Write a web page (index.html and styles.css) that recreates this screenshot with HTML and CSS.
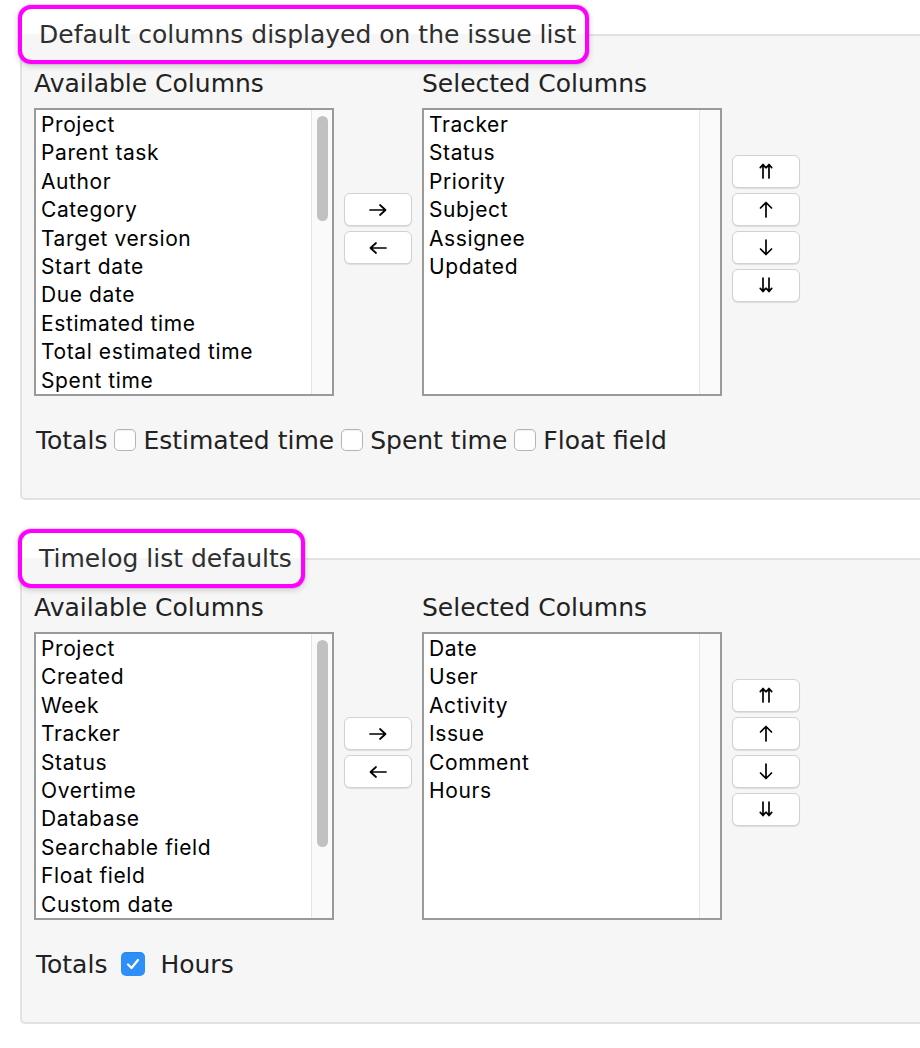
FILE: index.html
```html
<!DOCTYPE html>
<html>
<head>
<meta charset="utf-8">
<link rel="stylesheet" href="styles.css">
</head>
<body>
<fieldset class="box">
  <legend class="legend">Default columns displayed on the issue list</legend>
  <div class="columns">
    <div class="col-label avail-label">Available Columns</div>
    <div class="col-label sel-label">Selected Columns</div>
    <div class="listbox avail-list">
      <div class="options">
        <div class="opt">Project</div>
        <div class="opt">Parent task</div>
        <div class="opt">Author</div>
        <div class="opt">Category</div>
        <div class="opt">Target version</div>
        <div class="opt">Start date</div>
        <div class="opt">Due date</div>
        <div class="opt">Estimated time</div>
        <div class="opt">Total estimated time</div>
        <div class="opt">Spent time</div>
      </div>
      <div class="track"><div class="thumb thumb-issue"></div></div>
    </div>
    <div class="btn-group move-btns">
      <button class="btn" title="→"><svg class="ico-h" viewBox="0 0 18 12"><path d="M1 6 H16.5 M11 1 L16.5 6 L11 11"/></svg></button>
      <button class="btn" title="←"><svg class="ico-h" viewBox="0 0 18 12"><path d="M17 6 H1.5 M7 1 L1.5 6 L7 11"/></svg></button>
    </div>
    <div class="listbox sel-list">
      <div class="options">
        <div class="opt">Tracker</div>
        <div class="opt">Status</div>
        <div class="opt">Priority</div>
        <div class="opt">Subject</div>
        <div class="opt">Assignee</div>
        <div class="opt">Updated</div>
      </div>
      <div class="track"></div>
    </div>
    <div class="btn-group order-btns">
      <button class="btn" title="⇈"><svg class="ico-dv" viewBox="0 0 14 16"><path d="M4 15 V1.5 M10 15 V1.5 M1.3 4.6 L4 1.5 L6.7 4.6 M7.3 4.6 L10 1.5 L12.7 4.6"/></svg></button>
      <button class="btn" title="↑"><svg class="ico-v" viewBox="0 0 14 17"><path d="M7 16 V1.5 M1.5 7 L7 1.5 L12.5 7"/></svg></button>
      <button class="btn" title="↓"><svg class="ico-v" viewBox="0 0 14 17"><path d="M7 1 V15.5 M1.5 10 L7 15.5 L12.5 10"/></svg></button>
      <button class="btn" title="⇊"><svg class="ico-dv" viewBox="0 0 14 16"><path d="M4 1 V14.5 M10 1 V14.5 M1.3 11.4 L4 14.5 L6.7 11.4 M7.3 11.4 L10 14.5 L12.7 11.4"/></svg></button>
    </div>
  </div>
  <div class="totals">
    <span class="tlabel">Totals</span>
    <span class="cb"></span>
    <span class="tlabel">Estimated time</span>
    <span class="cb"></span>
    <span class="tlabel">Spent time</span>
    <span class="cb"></span>
    <span class="tlabel">Float field</span>
  </div>
</fieldset>

<fieldset class="box second">
  <legend class="legend">Timelog list defaults</legend>
  <div class="columns">
    <div class="col-label avail-label">Available Columns</div>
    <div class="col-label sel-label">Selected Columns</div>
    <div class="listbox avail-list">
      <div class="options">
        <div class="opt">Project</div>
        <div class="opt">Created</div>
        <div class="opt">Week</div>
        <div class="opt">Tracker</div>
        <div class="opt">Status</div>
        <div class="opt">Overtime</div>
        <div class="opt">Database</div>
        <div class="opt">Searchable field</div>
        <div class="opt">Float field</div>
        <div class="opt">Custom date</div>
      </div>
      <div class="track"><div class="thumb thumb-time"></div></div>
    </div>
    <div class="btn-group move-btns">
      <button class="btn" title="→"><svg class="ico-h" viewBox="0 0 18 12"><path d="M1 6 H16.5 M11 1 L16.5 6 L11 11"/></svg></button>
      <button class="btn" title="←"><svg class="ico-h" viewBox="0 0 18 12"><path d="M17 6 H1.5 M7 1 L1.5 6 L7 11"/></svg></button>
    </div>
    <div class="listbox sel-list">
      <div class="options">
        <div class="opt">Date</div>
        <div class="opt">User</div>
        <div class="opt">Activity</div>
        <div class="opt">Issue</div>
        <div class="opt">Comment</div>
        <div class="opt">Hours</div>
      </div>
      <div class="track"></div>
    </div>
    <div class="btn-group order-btns">
      <button class="btn" title="⇈"><svg class="ico-dv" viewBox="0 0 14 16"><path d="M4 15 V1.5 M10 15 V1.5 M1.3 4.6 L4 1.5 L6.7 4.6 M7.3 4.6 L10 1.5 L12.7 4.6"/></svg></button>
      <button class="btn" title="↑"><svg class="ico-v" viewBox="0 0 14 17"><path d="M7 16 V1.5 M1.5 7 L7 1.5 L12.5 7"/></svg></button>
      <button class="btn" title="↓"><svg class="ico-v" viewBox="0 0 14 17"><path d="M7 1 V15.5 M1.5 10 L7 15.5 L12.5 10"/></svg></button>
      <button class="btn" title="⇊"><svg class="ico-dv" viewBox="0 0 14 16"><path d="M4 1 V14.5 M10 1 V14.5 M1.3 11.4 L4 14.5 L6.7 11.4 M7.3 11.4 L10 14.5 L12.7 11.4"/></svg></button>
    </div>
  </div>
  <div class="totals">
    <span class="tlabel">Totals</span>
    <span class="cb cb-checked">
      <svg width="14" height="12" viewBox="0 0 14 12"><path d="M2 6.5 L5.5 10 L12 2" fill="none" stroke="#fff" stroke-width="2.2" stroke-linecap="round" stroke-linejoin="round"/></svg>
    </span>
    <span class="tlabel">Hours</span>
  </div>
</fieldset>
</body>
</html>
```

FILE: styles.css
```css
html, body {
  margin: 0;
  padding: 0;
  background: #ffffff;
  overflow: hidden;
}

body {
  font-family: "DejaVu Sans", Verdana, sans-serif;
  color: #2a2a2a;
}

.box {
  margin: 9px -40px 0 20px;
  padding: 0 0 42px 0;
  border: 2px solid #e2e2e2;
  border-radius: 5px;
  background: #f6f6f6;
  min-width: 0;
}

.box.second {
  margin-top: 33px;
}

.legend {
  margin-left: 0;
  padding: 0 9px 0 17px;
  height: 51px;
  line-height: 51px;
  font-size: 25px;
  color: #2f2f2f;
  border-radius: 9px;
  outline: 4px solid #ff00ff;
  box-shadow: 0 0 0 5px rgba(120, 0, 120, 0.12), 0 2px 6px 4px rgba(0, 0, 0, 0.18);
}

.columns {
  display: grid;
  grid-template-columns: 300px 88px 300px 88px;
  grid-template-rows: 48px 288px;
  margin-left: 12px;
}

.col-label {
  font-size: 25px;
  line-height: 48px;
  color: #222;
  white-space: nowrap;
}

.avail-label { grid-column: 1; grid-row: 1; }
.sel-label { grid-column: 3; grid-row: 1; }
.avail-list { grid-column: 1; grid-row: 2; }
.sel-list { grid-column: 3; grid-row: 2; }
.move-btns { grid-column: 2; grid-row: 1 / 3; }
.order-btns { grid-column: 4; grid-row: 1 / 3; }

.listbox {
  box-sizing: border-box;
  height: 288px;
  border: 2px solid #9a9a9a;
  background: #ffffff;
  display: flex;
  overflow: hidden;
}

.options {
  flex: 1;
  padding-left: 5px;
  overflow: hidden;
  font-family: Inter, "Liberation Sans", sans-serif;
  font-size: 21px;
  letter-spacing: 0.6px;
  color: #000;
}

.opt {
  height: 28.4px;
  line-height: 29px;
  white-space: nowrap;
}

.track {
  width: 20px;
  border-left: 1px solid #e6e6e6;
  background: #fafafa;
  display: flex;
  justify-content: center;
  align-items: flex-start;
}

.thumb {
  width: 11px;
  margin-top: 6px;
  border-radius: 6px;
  background: #c1c1c1;
}

.thumb-issue { height: 105px; }
.thumb-time { height: 207px; }

.btn-group {
  align-self: center;
  justify-self: center;
  display: flex;
  flex-direction: column;
  gap: 5px;
}

.btn {
  box-sizing: border-box;
  width: 68px;
  height: 33px;
  padding: 0;
  border: 1px solid #d2d2d2;
  border-radius: 6px;
  background: #ffffff;
  box-shadow: 0 1px 1px rgba(0, 0, 0, 0.1);
  display: flex;
  align-items: center;
  justify-content: center;
}

.btn svg {
  fill: none;
  stroke: #000;
  stroke-width: 1.7;
  stroke-linecap: round;
  stroke-linejoin: round;
}

.ico-h { width: 18px; height: 12px; margin-top: 2px; }
.ico-v { width: 14px; height: 17px; }
.ico-dv { width: 14px; height: 16px; }

.totals {
  display: flex;
  align-items: center;
  height: 32px;
  margin: 28px 0 0 14px;
}

.tlabel {
  font-size: 25px;
  color: #222;
  white-space: nowrap;
}

.cb {
  box-sizing: border-box;
  width: 22px;
  height: 22px;
  margin: 0 7px 0 7px;
  border: 1px solid #b4b4b4;
  border-radius: 5px;
  background: #ffffff;
  box-shadow: inset 0 1px 1px rgba(0, 0, 0, 0.06);
}

.cb-checked {
  width: 24px;
  height: 24px;
  margin: 0 15px 0 14px;
  border: none;
  background: #2d8ff7;
  display: flex;
  align-items: center;
  justify-content: center;
}
```
